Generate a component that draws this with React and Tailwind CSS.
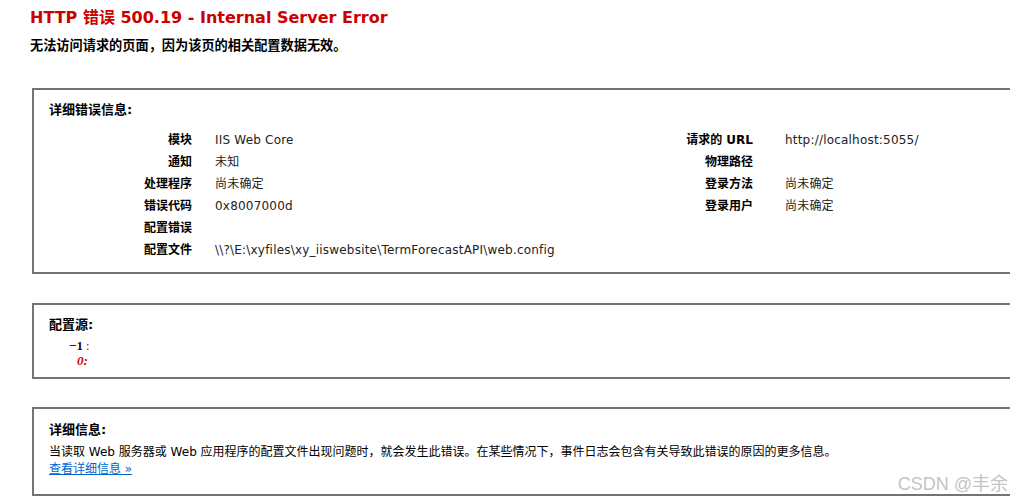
import React from 'react'

const font = { fontFamily: '"DejaVu Sans", "Noto Sans CJK SC", sans-serif' }

const leftRows = [
  ['模块', 'IIS Web Core'],
  ['通知', '未知'],
  ['处理程序', '尚未确定'],
  ['错误代码', '0x8007000d'],
  ['配置错误', ''],
  ['配置文件', '\\\\?\\E:\\xyfiles\\xy_iiswebsite\\TermForecastAPI\\web.config'],
]

const rightRows = [
  ['请求的 URL', 'http://localhost:5055/'],
  ['物理路径', ''],
  ['登录方法', '尚未确定'],
  ['登录用户', '尚未确定'],
]

function Rows({ rows, labelW, valueW }) {
  return (
    <div className="flex flex-col">
      {rows.map(([k, v]) => (
        <div key={k} className="flex h-[22px] items-center">
          <div className={`${labelW} shrink-0 text-right font-bold text-black`}>{k}</div>
          <div className={`${valueW} shrink-0 text-[#222] tracking-[0.2px]`}>{v}</div>
        </div>
      ))}
    </div>
  )
}

export default function App() {
  return (
    <div
      className="relative w-[1010px] h-[501px] overflow-hidden bg-white text-[12px] text-black"
      style={font}
    >
      {/* 标题 */}
      <div className="pl-[30px] pt-[7px]">
        <h1 className="text-[16px] font-bold text-[#cc0000] leading-[22px]">
          HTTP 错误 500.19 - Internal Server Error
        </h1>
        <h2 className="mt-[8px] text-[13.2px] font-bold leading-[18px]">
          无法访问请求的页面，因为该页的相关配置数据无效。
        </h2>
      </div>

      {/* 详细错误信息 */}
      <div className="ml-[32px] mt-[33px] w-[1000px] h-[186px] border-2 border-[#747474] pl-[15px] pt-[11px]">
        <div className="font-bold text-[13px] leading-[18px]">详细错误信息:</div>
        <div className="mt-[10px] flex">
          <Rows rows={leftRows} labelW="w-[143px]" valueW="w-[448px] pl-[23px]" />
          <Rows rows={rightRows} labelW="w-[113px]" valueW="pl-[32px]" />
        </div>
      </div>

      {/* 配置源 */}
      <div className="ml-[32px] mt-[29px] w-[1000px] h-[76px] border-2 border-[#747474] pl-[15px] pt-[11px]">
        <div className="font-bold text-[13px] leading-[18px]">配置源:</div>
        <div
          className="mt-[4px] pl-[20px] text-[13px] leading-[15px]"
          style={{ fontFamily: '"Liberation Serif", serif' }}
        >
          <div className="font-bold text-[#111]">
            −1<span className="text-[#cc0000] font-normal ml-[3px]">:</span>
          </div>
          <div className="pl-[8px] italic font-bold text-[#cc0000]">0:</div>
        </div>
      </div>

      {/* 详细信息 */}
      <div className="ml-[32px] mt-[28px] w-[1000px] h-[89px] border-2 border-[#747474] pl-[15px] pt-[12px]">
        <div className="font-bold text-[13px] leading-[18px]">详细信息:</div>
        <p className="mt-[4px] leading-[18px]">
          当读取 Web 服务器或 Web 应用程序的配置文件出现问题时，就会发生此错误。在某些情况下，事件日志会包含有关导致此错误的原因的更多信息。
        </p>
        <a href="#" className="text-[#0066cc] underline leading-[16px] block w-fit">
          查看详细信息 »
        </a>
      </div>

      {/* 水印 */}
      <div
        className="absolute right-[2px] bottom-[3px] text-[18px] text-[#c4c4c4]"
        style={{ fontFamily: '"Liberation Sans", "Noto Sans CJK SC", sans-serif' }}
      >
        CSDN @丰余
      </div>
    </div>
  )
}
